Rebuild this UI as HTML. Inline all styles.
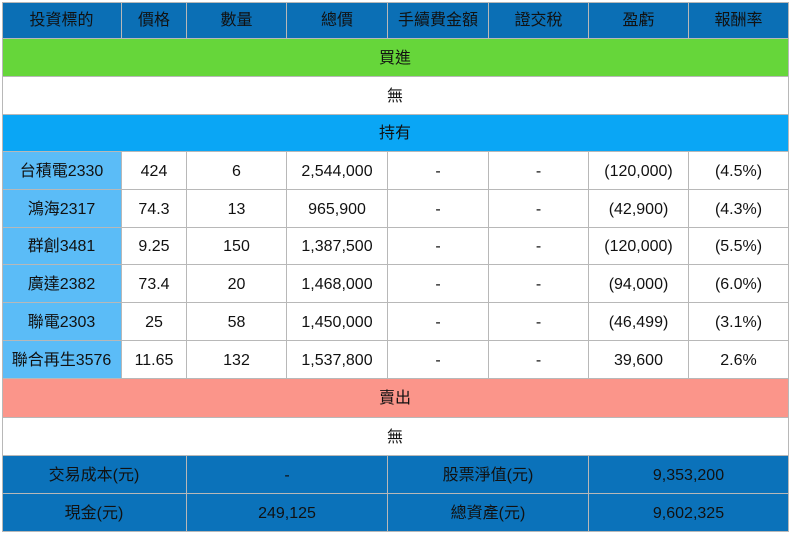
<!DOCTYPE html>
<html><head><meta charset="utf-8"><style>
body{margin:0;width:793px;height:536px;background:#fff;font-family:"Liberation Sans","Noto Sans CJK TC",sans-serif;font-size:16px;color:#111;position:relative;overflow:hidden}
.c{position:absolute;box-sizing:border-box;border-right:1px solid #b8b8b8;border-bottom:1px solid #b8b8b8;display:flex;align-items:center;justify-content:center;line-height:18px;padding-top:2px}
</style></head><body>
<div id="t"></div>
<script>
var X=[2,122,187,287,388,489,589,689,789];
var Y=[2,39,77,115,152,190,228,265,303,341,379,418,456,494,532];
var html='';
function cell(x1,x2,y1,y2,bg,txt){html+='<div class="c" style="left:'+x1+'px;width:'+(x2-x1)+'px;top:'+y1+'px;height:'+(y2-y1)+'px;background:'+bg+'">'+txt+'</div>';}
var hd=['投資標的','價格','數量','總價','手續費金額','證交稅','盈虧','報酬率'];
for(var i=0;i<8;i++)cell(X[i],X[i+1],Y[0],Y[1],'#0b6fb5',hd[i]);
cell(X[0],X[8],Y[1],Y[2],'#66d63a','買進');
cell(X[0],X[8],Y[2],Y[3],'#fff','無');
cell(X[0],X[8],Y[3],Y[4],'#0aa6f5','持有');
var rows=[['台積電2330','424','6','2,544,000','-','-','(120,000)','(4.5%)'],
['鴻海2317','74.3','13','965,900','-','-','(42,900)','(4.3%)'],
['群創3481','9.25','150','1,387,500','-','-','(120,000)','(5.5%)'],
['廣達2382','73.4','20','1,468,000','-','-','(94,000)','(6.0%)'],
['聯電2303','25','58','1,450,000','-','-','(46,499)','(3.1%)'],
['聯合再生3576','11.65','132','1,537,800','-','-','39,600','2.6%']];
for(var r=0;r<6;r++)for(var i=0;i<8;i++)cell(X[i],X[i+1],Y[4+r],Y[5+r],i==0?'#5bbcf7':'#fff',rows[r][i]);
cell(X[0],X[8],Y[10],Y[11],'#fb958a','賣出');
cell(X[0],X[8],Y[11],Y[12],'#fff','無');
var b=[['交易成本(元)','-','股票淨值(元)','9,353,200'],['現金(元)','249,125','總資產(元)','9,602,325']];
var bx=[2,187,388,589,789];
for(var r=0;r<2;r++)for(var i=0;i<4;i++)cell(bx[i],bx[i+1],Y[12+r],Y[13+r],'#0b72ba',b[r][i]);
document.getElementById('t').innerHTML=html;
</script>
<div style="position:absolute;left:2px;top:2px;width:1px;height:530px;background:#b8b8b8"></div>
<div style="position:absolute;left:2px;top:2px;width:787px;height:1px;background:#b8b8b8"></div>
</body></html>
